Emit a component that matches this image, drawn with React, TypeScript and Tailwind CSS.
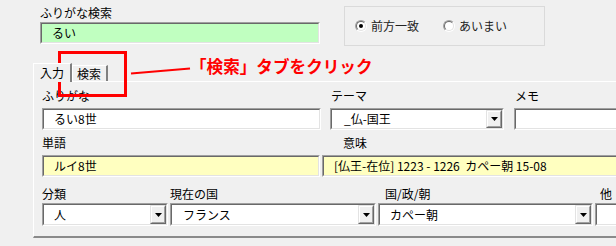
import React from "react";

const jp = "font-['Noto_Sans_CJK_JP','Liberation_Sans',sans-serif]";

type FieldProps = {
  className?: string;
  bg?: string;
  pad?: string;
  combo?: boolean;
  children?: React.ReactNode;
};

const DropButton = () => (
  <div className="h-full w-[16px] shrink-0 border border-t-[#e3e3e3] border-l-[#e3e3e3] border-b-[#696969] border-r-[#696969] bg-[#f0f0f0]">
    <div className="h-full w-full border border-t-white border-l-white border-b-[#a0a0a0] border-r-[#a0a0a0] flex items-center justify-center">
      <svg width="7" height="4" viewBox="0 0 7 4">
        <path d="M0 0h7L3.5 4z" fill="#000" />
      </svg>
    </div>
  </div>
);

// sunken win32-style edit / combo box
const Field = ({ className = "", bg = "bg-white", pad = "pl-[9px]", combo, children }: FieldProps) => (
  <div className={`shrink-0 border border-t-[#a0a0a0] border-l-[#a0a0a0] border-b-white border-r-white ${className}`}>
    <div className={`h-full flex border border-t-[#696969] border-l-[#696969] border-b-[#e3e3e3] border-r-[#e3e3e3] ${bg}`}>
      <div className={`flex-1 flex items-center whitespace-nowrap overflow-hidden text-[12px] text-black ${pad}`}>
        {children}
      </div>
      {combo && <DropButton />}
    </div>
  </div>
);

const Label = ({ children, className = "" }: { children: React.ReactNode; className?: string }) => (
  <div className={`h-[16px] leading-[16px] text-[12px] text-black whitespace-nowrap ${className}`}>{children}</div>
);

const Radio = ({ checked, label }: { checked?: boolean; label: string }) => (
  <div className="flex items-center gap-[4px]">
    <div className="w-[12px] h-[12px] rounded-full border border-t-[#a0a0a0] border-l-[#a0a0a0] border-b-white border-r-white">
      <div className="w-full h-full rounded-full border border-t-[#696969] border-l-[#696969] border-b-[#e3e3e3] border-r-[#e3e3e3] bg-white flex items-center justify-center">
        {checked && <div className="w-[4px] h-[4px] rounded-full bg-black" />}
      </div>
    </div>
    <span className="text-[12px] text-[#222]">{label}</span>
  </div>
);

export default function App() {
  return (
    <div className={`relative w-[616px] h-[246px] overflow-hidden bg-[#f0f0f0] ${jp}`}>
      {/* search area */}
      <div className="flex pt-[5px] pl-[40px]">
        <div>
          <Label className="mb-[1px]">ふりがな検索</Label>
          <Field className="w-[280px] h-[22px]" bg="bg-[#c0ffc0]" pad="pl-[10px]">るい</Field>
        </div>
        <div className="ml-[24px] mt-[1px] w-[201px] h-[40px] border border-[#dadada] flex items-center pl-[10px] gap-[24px]">
          <Radio checked label="前方一致" />
          <Radio label="あいまい" />
        </div>
      </div>

      {/* tabs */}
      <div className="flex items-end ml-[33px] mt-[17px] h-[18px]">
        <div className="relative z-10 h-[19px] w-[39px] mb-[-1px] bg-[#f0f0f0] border-t border-l border-t-white border-l-white border-r-2 border-r-[#808080] pl-[6px] text-[12px] leading-[17px] text-black">
          入力
        </div>
        <div className="h-[16px] w-[36px] border-t border-l border-t-white border-l-white border-r-2 border-r-[#808080] pl-[4px] text-[12px] leading-[15px] text-black">
          検索
        </div>
      </div>

      {/* tab panel */}
      <div className="ml-[33px] h-[157px] border-t border-l border-t-white border-l-white border-b-2 border-b-[#8a8a8a] pl-[8px] pt-[6px]">
        <div className="flex">
          <div>
            <Label className="mb-[4px]">ふりがな</Label>
            <Field className="w-[279px] h-[22px]" pad="pl-[10px]">るい8世</Field>
          </div>
          <div className="ml-[9px]">
            <Label className="mb-[4px] pl-[1px]">テーマ</Label>
            <Field className="w-[174px] h-[22px]" combo pad="pl-[12px]">_仏-国王</Field>
          </div>
          <div className="ml-[10px]">
            <Label className="mb-[4px] pl-[1px]">メモ</Label>
            <Field className="w-[120px] h-[22px]" />
          </div>
        </div>

        <div className="flex mt-[5px]">
          <div>
            <Label className="mb-[4px]">単語</Label>
            <Field className="w-[278px] h-[22px]" bg="bg-[#ffffc0]" pad="pl-[10px]">ルイ8世</Field>
          </div>
          <div className="ml-[2px]">
            <Label className="mb-[4px] pl-[21px]">意味</Label>
            <Field className="w-[300px] h-[22px]" bg="bg-[#ffffc0]" pad="pl-[10px]">
              [仏王-在位] 1223 - 1226&nbsp;&nbsp;カペー朝 15-08
            </Field>
          </div>
        </div>

        <div className="flex mt-[9px]">
          <div>
            <Label className="mb-[1px]">分類</Label>
            <Field className="w-[126px] h-[23px]" combo pad="pl-[10px]">人</Field>
          </div>
          <div className="ml-[2px]">
            <Label className="mb-[1px]">現在の国</Label>
            <Field className="w-[206px] h-[23px]" combo pad="pl-[11px]">フランス</Field>
          </div>
          <div className="ml-[2px]">
            <Label className="mb-[1px] pl-[7px]">国/政/朝</Label>
            <Field className="w-[215px] h-[23px]" combo pad="pl-[10px]">カペー朝</Field>
          </div>
          <div className="ml-[2px]">
            <Label className="mb-[1px] pl-[5px]">他</Label>
            <Field className="w-[60px] h-[23px]" />
          </div>
        </div>
      </div>

      {/* red annotation overlay */}
      <svg className="absolute left-0 top-0 pointer-events-none" width="616" height="246">
        <rect x="59.5" y="52.5" width="66" height="43" fill="none" stroke="#ff0000" strokeWidth="3" />
        <path d="M131 73.5L190 68.5" stroke="#ff0000" strokeWidth="2" fill="none" />
      </svg>
      <div className="absolute left-[190px] top-[58px] text-[16.6px] leading-none font-bold text-[#ff0000] whitespace-nowrap">
        「検索」タブをクリック
      </div>
    </div>
  );
}
